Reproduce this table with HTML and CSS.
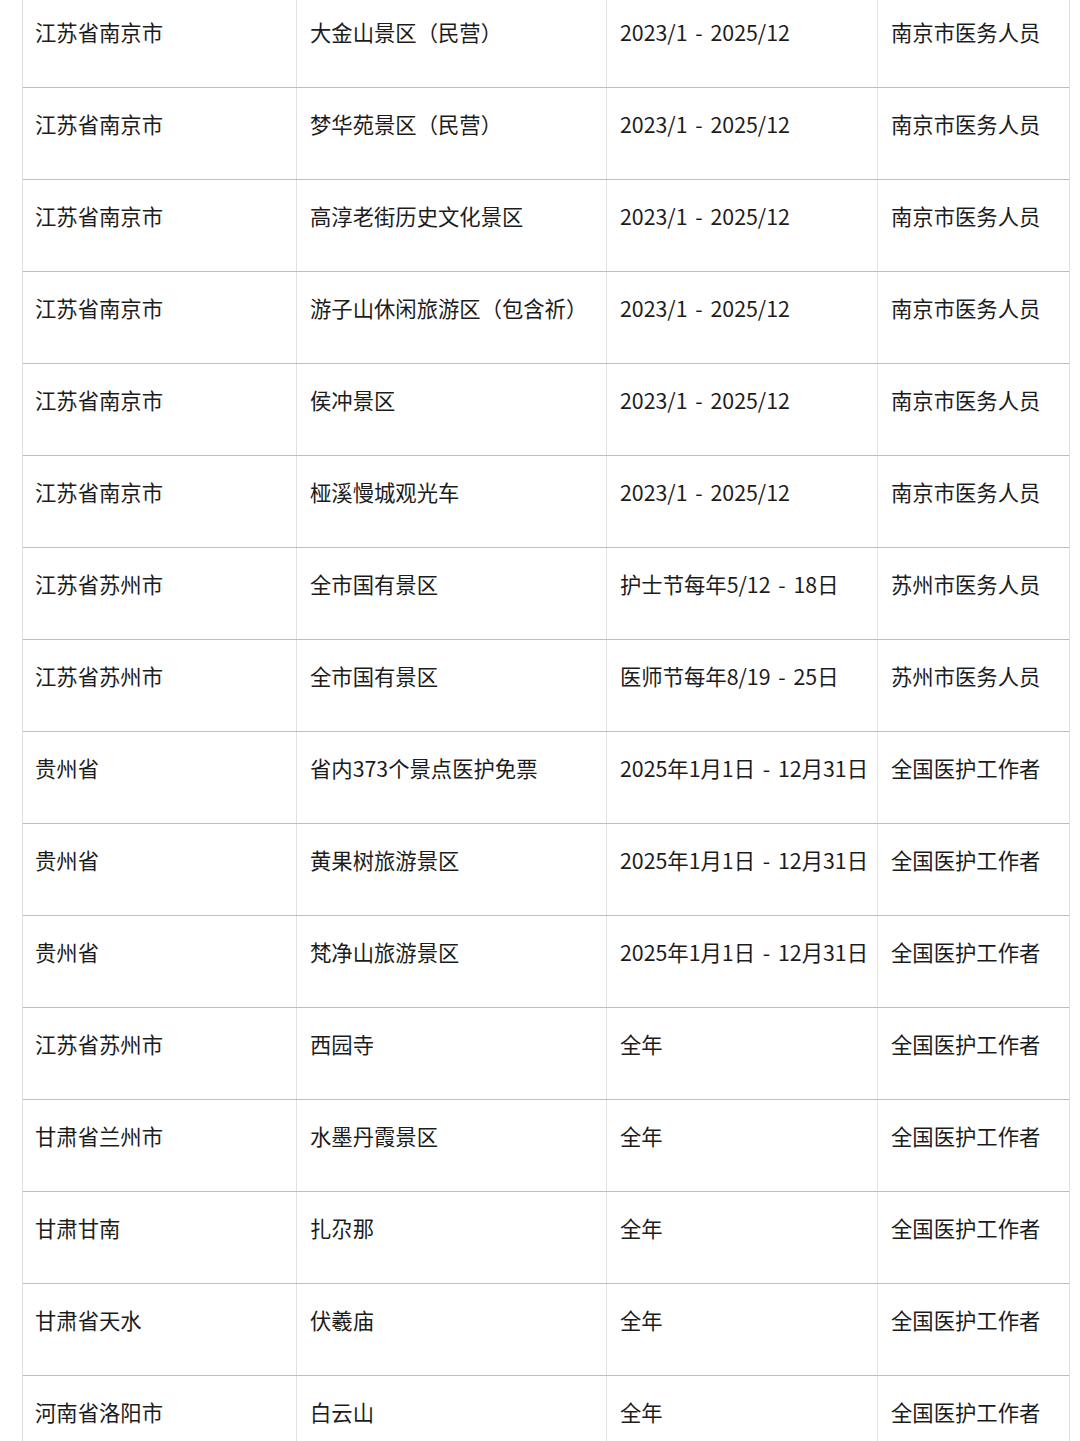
FILE: index.html
```html
<!DOCTYPE html>
<html lang="zh-CN">
<head>
<meta charset="utf-8">
<title>医护免票景区</title>
<link rel="stylesheet" href="styles.css">
</head>
<body>
<div class="table">
  <div class="row"><div class="cell">江苏省南京市</div><div class="cell">大金山景区（民营）</div><div class="cell">2023/1 - 2025/12</div><div class="cell">南京市医务人员</div></div>
  <div class="row"><div class="cell">江苏省南京市</div><div class="cell">梦华苑景区（民营）</div><div class="cell">2023/1 - 2025/12</div><div class="cell">南京市医务人员</div></div>
  <div class="row"><div class="cell">江苏省南京市</div><div class="cell">高淳老街历史文化景区</div><div class="cell">2023/1 - 2025/12</div><div class="cell">南京市医务人员</div></div>
  <div class="row"><div class="cell">江苏省南京市</div><div class="cell">游子山休闲旅游区（包含祈）</div><div class="cell">2023/1 - 2025/12</div><div class="cell">南京市医务人员</div></div>
  <div class="row"><div class="cell">江苏省南京市</div><div class="cell">侯冲景区</div><div class="cell">2023/1 - 2025/12</div><div class="cell">南京市医务人员</div></div>
  <div class="row"><div class="cell">江苏省南京市</div><div class="cell">桠溪慢城观光车</div><div class="cell">2023/1 - 2025/12</div><div class="cell">南京市医务人员</div></div>
  <div class="row"><div class="cell">江苏省苏州市</div><div class="cell">全市国有景区</div><div class="cell">护士节每年5/12 - 18日</div><div class="cell">苏州市医务人员</div></div>
  <div class="row"><div class="cell">江苏省苏州市</div><div class="cell">全市国有景区</div><div class="cell">医师节每年8/19 - 25日</div><div class="cell">苏州市医务人员</div></div>
  <div class="row"><div class="cell">贵州省</div><div class="cell">省内373个景点医护免票</div><div class="cell">2025年1月1日 - 12月31日</div><div class="cell">全国医护工作者</div></div>
  <div class="row"><div class="cell">贵州省</div><div class="cell">黄果树旅游景区</div><div class="cell">2025年1月1日 - 12月31日</div><div class="cell">全国医护工作者</div></div>
  <div class="row"><div class="cell">贵州省</div><div class="cell">梵净山旅游景区</div><div class="cell">2025年1月1日 - 12月31日</div><div class="cell">全国医护工作者</div></div>
  <div class="row"><div class="cell">江苏省苏州市</div><div class="cell">西园寺</div><div class="cell">全年</div><div class="cell">全国医护工作者</div></div>
  <div class="row"><div class="cell">甘肃省兰州市</div><div class="cell">水墨丹霞景区</div><div class="cell">全年</div><div class="cell">全国医护工作者</div></div>
  <div class="row"><div class="cell">甘肃甘南</div><div class="cell">扎尕那</div><div class="cell">全年</div><div class="cell">全国医护工作者</div></div>
  <div class="row"><div class="cell">甘肃省天水</div><div class="cell">伏羲庙</div><div class="cell">全年</div><div class="cell">全国医护工作者</div></div>
  <div class="row"><div class="cell">河南省洛阳市</div><div class="cell">白云山</div><div class="cell">全年</div><div class="cell">全国医护工作者</div></div>
</div>
</body>
</html>
```

FILE: styles.css
```css
html, body {
  margin: 0;
  padding: 0;
  background: #ffffff;
}
body {
  font-family: "Noto Sans CJK SC", "Noto Sans", sans-serif;
  font-size: 21.33px;
  line-height: 32px;
  color: #1c1c1c;
  overflow: hidden;
}
.table {
  margin: -4px 0 0 22px;
  width: 1046px;
  border-left: 1px solid #dedede;
  border-right: 1px solid #dedede;
}
.row {
  display: grid;
  grid-template-columns: 274px 310px 271px 1fr;
  height: 92px;
  box-sizing: border-box;
  border-bottom: 1px solid #bdbdbd;
}
.cell {
  padding: 20px 0 0 13px;
  white-space: nowrap;
  word-spacing: 3px;
  border-right: 1px solid #e2e2e2;
}
.cell:first-child {
  padding-left: 12px;
}
.cell:last-child {
  border-right: none;
}
```
